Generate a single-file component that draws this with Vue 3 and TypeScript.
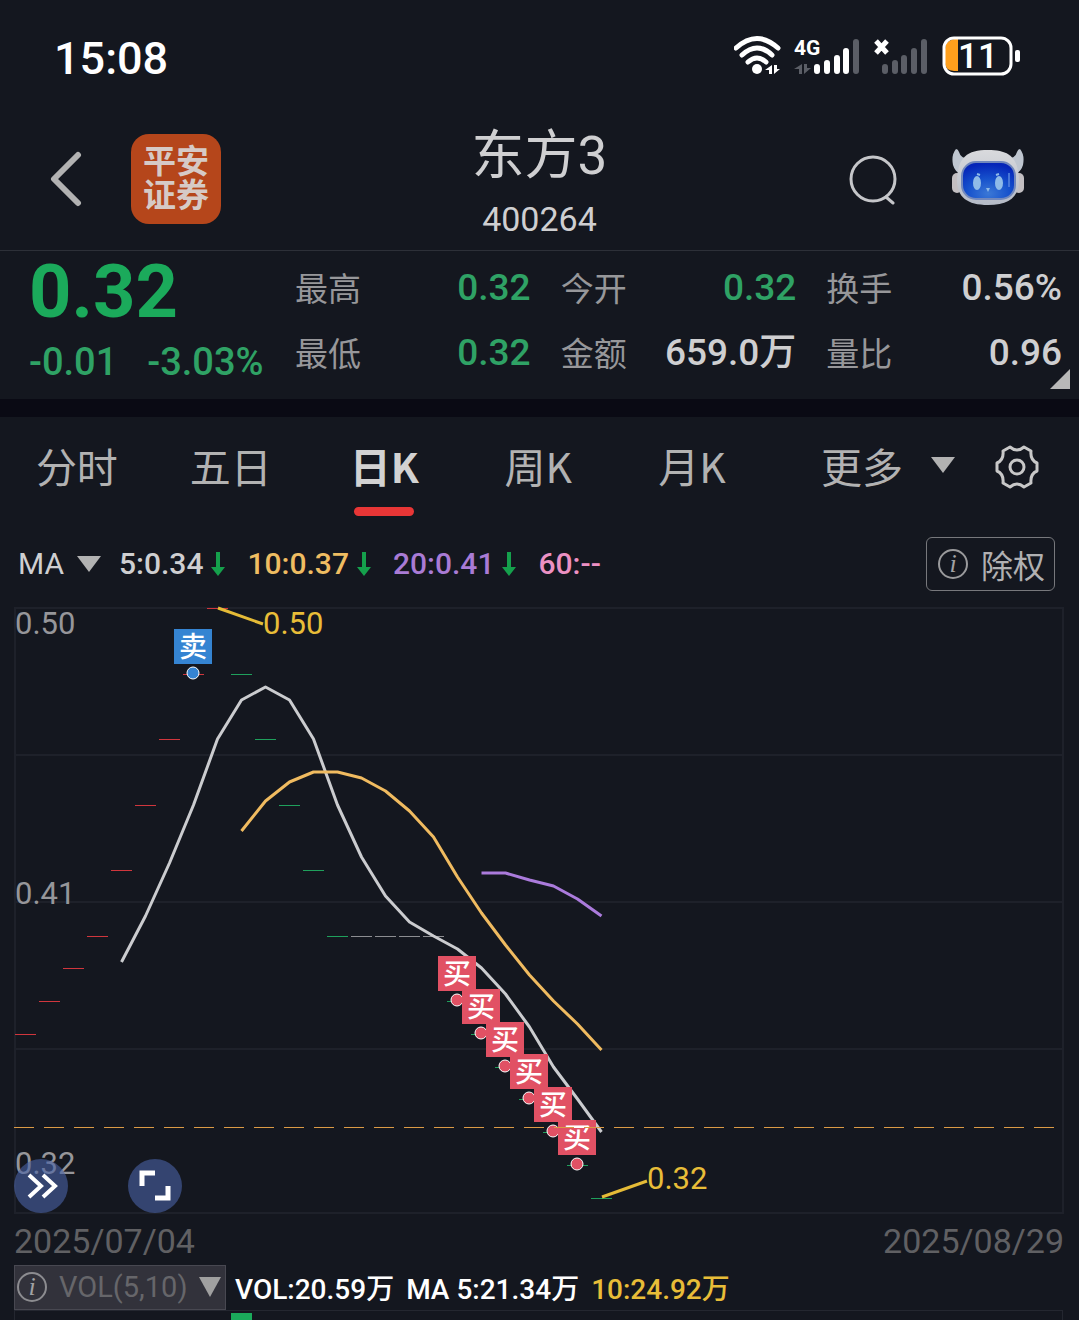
<script setup lang="ts">
import { computed, ref } from 'vue'

interface Quote { label: string; value: string; down?: boolean }
interface Average { text: string; tone: string; arrow: boolean }

const quotes: Quote[] = [
  { label: '最高', value: '0.32', down: true },
  { label: '今开', value: '0.32', down: true },
  { label: '换手', value: '0.56%' },
  { label: '最低', value: '0.32', down: true },
  { label: '金额', value: '659.0万' },
  { label: '量比', value: '0.96' },
]

const tabs = ['分时', '五日', '日K', '周K', '月K']
const activeTab = ref('日K')
const overlay = ref('MA')
const subChart = ref('VOL(5,10)')

const averages: Average[] = [
  { text: '5:0.34', tone: 'white', arrow: true },
  { text: '10:0.37', tone: 'orange', arrow: true },
  { text: '20:0.41', tone: 'purple', arrow: true },
  { text: '60:--', tone: 'pink', arrow: false },
]

const closes = [
  0.37, 0.38, 0.39, 0.4, 0.42, 0.44, 0.46, 0.48, 0.5, 0.48, 0.46, 0.44, 0.42,
  0.4, 0.4, 0.4, 0.4, 0.4, 0.38, 0.37, 0.36, 0.35, 0.34, 0.33, 0.32,
]
const xAt = (i: number): number => 11.5 + 24 * i
const yAt = (price: number): number => Math.round((0.5 - price) * 3275 + 0.01)

const candles = computed(() =>
  closes.map((price, i) => {
    const before = i === 0 ? 0.36 : closes[i - 1]
    const tone = price > before ? 'up' : price < before ? 'down' : 'flat'
    return { x: xAt(i) - 10.5, y: yAt(price), tone }
  }),
)

// Averages are cut to three decimals before they are plotted.
function average(days: number): string {
  const points: string[] = []
  for (let i = days - 1; i < closes.length; i++) {
    const sum = closes.slice(i - days + 1, i + 1).reduce((a, b) => a + b, 0)
    const mean = Math.floor((sum / days) * 1000 + 0.001) / 1000
    points.push(`${xAt(i)},${yAt(mean)}`)
  }
  return points.join(' ')
}

const trades = [
  { day: 7, kind: 'sell', label: '卖' },
  ...[18, 19, 20, 21, 22, 23].map((day) => ({ day, kind: 'buy', label: '买' })),
].map((t) => ({ ...t, x: Math.floor(xAt(t.day)), y: yAt(closes[t.day]) }))
</script>

<template>
  <main class="app">
    <div class="status">
      <time class="clock">15:08</time>
      <svg class="status-icons" viewBox="0 0 290 44" width="290" height="44" aria-hidden="true">
        <g fill="none" stroke="#fff" stroke-width="5" stroke-linecap="round">
          <path d="M2 14Q23-5 44 14" />
          <path d="M8 21Q23 7 38 21" />
          <path d="M14 28Q23 20 32 28" />
        </g>
        <circle cx="23" cy="35" r="5" fill="#fff" />
        <path d="M38 31v9h-3v-4h-4zM40 31v9l6-5h-3v-4z" fill="#fff" />
        <text x="60" y="21" class="net">4G</text>
        <path d="M68 30v10h-3v-5h-5zM70 30v10l7-6h-4v-4z" fill="#5b5e66" />
        <g stroke-width="6" stroke-linecap="round" stroke="#fff">
          <path d="M83 33v4M93 29v8M103 24v13M112 17v20" />
          <path d="M122 8v29M151 33v4M161 29v8M170 24v13M180 17v20M190 8v29" stroke="#5b5e66" />
        </g>
        <path d="M142 7l11 12M153 7l-11 12" stroke="#fff" stroke-width="5" />
        <path d="M224 5h-4q-9 2-9 10v14q0 7 9 8h4z" fill="#ff9f1c" />
        <rect x="210" y="4" width="67" height="36" rx="10" fill="none" stroke="#fff" stroke-width="3" />
        <rect x="281" y="16" width="5" height="12" rx="2" fill="#fff" />
        <text x="224" y="34" class="charge">11</text>
      </svg>
    </div>

    <header class="header">
      <div class="side">
        <button class="plain back" aria-label="返回">
          <svg viewBox="0 0 34 56" width="34" height="56"><path d="M29 4L5 28l24 24" fill="none" stroke="#b2b2b2" stroke-width="6" stroke-linecap="round" stroke-linejoin="round" /></svg>
        </button>
        <div class="brand"><span>平安</span><span>证券</span></div>
      </div>
      <div class="heading">
        <h1>东方3</h1>
        <p>400264</p>
      </div>
      <div class="side tools">
        <button class="plain" aria-label="搜索">
          <svg viewBox="0 0 50 52" width="50" height="52"><g fill="none" stroke="#c5c6c9" stroke-width="3" stroke-linecap="round"><circle cx="25" cy="26" r="22" /><path d="M38 44l7 6" /></g></svg>
        </button>
        <button class="plain" aria-label="智能助手">
          <svg viewBox="0 2 76 60" width="76" height="60">
            <defs>
              <linearGradient id="shell" x1="0" y1="0" x2="0" y2="1"><stop offset="0" stop-color="#d9dadd" /><stop offset="1" stop-color="#b4bac6" /></linearGradient>
              <radialGradient id="screen" cx=".5" cy=".85" r=".8"><stop offset="0" stop-color="#3b78d6" /><stop offset=".5" stop-color="#1651cc" /><stop offset="1" stop-color="#0525b8" /></radialGradient>
            </defs>
            <path d="M6 2Q1 8 3 18q2 7 8 9l12-15q-12 1-14-7-1-3-3-3zM70 2q5 6 3 16-2 7-8 9L53 12q12 1 14-7 1-3 3-3z" fill="#bfc6d0" />
            <rect x="2" y="26" width="10" height="20" rx="5" fill="#c3bfc2" />
            <rect x="64" y="26" width="10" height="20" rx="5" fill="#c3bfc2" />
            <path d="M38 3C17 3 8 10 7 33c0 17 10 25 31 25s31-8 31-25C68 10 59 3 38 3z" fill="url(#shell)" />
            <rect x="12" y="15" width="53" height="37" rx="14" fill="url(#screen)" stroke="#7188bd" stroke-width="2" />
            <ellipse cx="27" cy="36" rx="4" ry="7" fill="#8fbbe8" />
            <ellipse cx="49" cy="36" rx="4" ry="7" fill="#8fbbe8" />
            <path d="M27 27l3 1M46 28l3-1" stroke="#8fbbe8" stroke-width="2" />
            <path d="M36 41h4l-2 4z" fill="#8fbbe8" />
            <path d="M59 26v14" stroke="#4776d8" stroke-width="2" />
          </svg>
        </button>
      </div>
    </header>

    <section class="quote">
      <div class="price">
        <strong>0.32</strong>
        <p><span>-0.01</span><span>-3.03%</span></p>
      </div>
      <dl class="figures">
        <div v-for="q in quotes" :key="q.label">
          <dt>{{ q.label }}</dt>
          <dd :class="{ down: q.down }">{{ q.value }}</dd>
        </div>
      </dl>
      <svg class="corner" viewBox="0 0 20 20" width="20" height="20" aria-hidden="true"><path d="M20 0v20H0z" fill="#b8b8b8" /></svg>
    </section>

    <nav class="tabs">
      <button v-for="tab in tabs" :key="tab" class="plain tab" :class="{ active: tab === activeTab }" @click="activeTab = tab">{{ tab }}</button>
      <button class="plain more" aria-haspopup="menu">
        更多
        <svg viewBox="0 0 24 16" width="24" height="16"><path d="M0 0h24L12 16z" fill="#b2b2b2" /></svg>
      </button>
      <button class="plain gear" aria-label="设置">
        <svg viewBox="0 0 44 44" width="44" height="44"><g fill="none" stroke="#c8c8c8" stroke-width="3" stroke-linejoin="round"><path d="M15 2Q22 8 29 2l7 4q-1 9 6 12v8q-7 3-6 12l-7 4q-7-6-14 0l-7-4q1-9-6-12v-8q7-3 6-12z" /><circle cx="22" cy="22" r="7" /></g></svg>
      </button>
    </nav>

    <div class="indicators">
      <span class="picker overlay-picker">
        <select v-model="overlay" aria-label="主图指标"><option>MA</option></select>
        <svg viewBox="0 0 24 16" width="24" height="16" aria-hidden="true"><path d="M0 0h24L12 16z" fill="#b2b2b2" /></svg>
      </span>
      <span v-for="a in averages" :key="a.text" class="average" :class="a.tone">
        {{ a.text }}
        <svg v-if="a.arrow" viewBox="0 0 16 24" width="16" height="24" aria-hidden="true"><path d="M6 0h4v15h5L8 24 1 15h5z" fill="#15a04c" /></svg>
      </span>
      <button class="rights">
        <svg viewBox="0 0 32 32" width="32" height="32" aria-hidden="true"><circle cx="16" cy="16" r="14" fill="none" stroke="#9a9a9c" stroke-width="2" /><text x="16" y="24" class="info">i</text></svg>
        除权
      </button>
    </div>

    <section class="chart">
      <svg class="plot" viewBox="0 0 1049 605" role="img" aria-label="日K线图">
        <g class="grid">
          <rect x="1" y="0" width="1048" height="605" />
          <path d="M0 147h1049M0 294h1049M0 441h1049" />
        </g>
        <g class="axis">
          <text x="1" y="26">0.50</text>
          <text x="1" y="296">0.41</text>
          <text x="1" y="566">0.32</text>
        </g>
        <rect v-for="(c, i) in candles" :key="i" :x="c.x" :y="c.y" width="21" height="1" :class="c.tone" />
        <polyline class="line ma5" :points="average(5)" />
        <polyline class="line ma10" :points="average(10)" />
        <polyline class="line ma20" :points="average(20)" />
        <g v-for="t in trades" :key="t.day" :class="t.kind">
          <rect :x="t.x - 19" :y="t.y - 45" width="38" height="35" />
          <text :x="t.x" :y="t.y - 17">{{ t.label }}</text>
          <circle :cx="t.x" :cy="t.y - 1" r="6" />
        </g>
        <path class="latest" d="M0 519.5h1049" />
        <g class="extreme">
          <path d="M204 0l45 16M588 589l45-16" />
          <text x="249" y="26">0.50</text>
          <text x="633" y="581">0.32</text>
        </g>
      </svg>
      <div class="floating">
        <button aria-label="展开">
          <svg viewBox="0 0 54 54" width="54" height="54"><path d="M15 16l12 11-12 11M29 16l12 11-12 11" fill="none" stroke="#fff" stroke-width="4" /></svg>
        </button>
        <button aria-label="全屏">
          <svg viewBox="0 0 54 54" width="54" height="54"><path d="M14 27V14h13M27 39h13V27" fill="none" stroke="#fff" stroke-width="5" /></svg>
        </button>
      </div>
    </section>

    <div class="dates"><time>2025/07/04</time><time>2025/08/29</time></div>

    <div class="volume">
      <span class="picker sub-picker">
        <svg viewBox="0 0 32 32" width="32" height="32" aria-hidden="true"><circle cx="16" cy="16" r="14" fill="none" stroke="#8c8c90" stroke-width="2" /><text x="16" y="24" class="info">i</text></svg>
        <select v-model="subChart" aria-label="副图指标"><option>VOL(5,10)</option></select>
        <svg viewBox="0 0 22 20" width="22" height="20" aria-hidden="true"><path d="M0 0h22L11 20z" fill="#a0a0a0" /></svg>
      </span>
      <span class="readings">
        <span>VOL:20.59万</span>
        <span>MA 5:21.34万</span>
        <span class="gold">10:24.92万</span>
      </span>
    </div>
    <div class="bars"><i></i></div>
  </main>
</template>

<style>
body {
  background: #14171f;
}
</style>

<style scoped>
* {
  box-sizing: border-box;
}
.app {
  display: flex;
  flex-direction: column;
  min-height: 100vh;
  background: #14171f;
  color: #cfcfd1;
  font-family: Roboto, "Noto Sans CJK SC", sans-serif;
}
svg {
  display: block;
  flex: none;
}
p, h1, dl, dd {
  margin: 0;
}
button, select {
  font: inherit;
  color: inherit;
}
.plain {
  padding: 0;
  border: 0;
  background: none;
}
.status {
  display: flex;
  justify-content: space-between;
  align-items: center;
  height: 112px;
  padding: 0 55px 0 54px;
}
.clock {
  padding-top: 4px;
  color: #fff;
  font-size: 45px;
  font-weight: 500;
}
.net {
  fill: #fff;
  font-size: 21px;
  font-weight: 700;
}
.charge {
  fill: #fff;
  font-size: 35px;
  font-weight: 500;
}
.header {
  display: grid;
  grid-template-columns: 1fr auto 1fr;
  align-items: center;
  height: 139px;
  border-bottom: 1px solid #2d3038;
}
.side {
  display: flex;
  align-items: center;
  gap: 48px;
  padding: 0 0 4px 49px;
}
.tools {
  justify-content: flex-end;
  gap: 52px;
  padding: 0 53px 4px 0;
}
.brand {
  display: flex;
  flex-direction: column;
  justify-content: center;
  align-items: center;
  width: 90px;
  height: 90px;
  border-radius: 18px;
  background: #b5461b;
  color: #d6cac6;
  font-size: 33px;
  font-weight: 700;
  line-height: 34px;
}
.heading {
  text-align: center;
}
.heading h1 {
  font-size: 53px;
  font-weight: 400;
  line-height: 76px;
}
.heading p {
  font-size: 34px;
  line-height: 50px;
}
.quote {
  position: relative;
  display: flex;
  height: 148px;
  padding-right: 17px;
}
.price {
  flex: 0 0 295px;
  padding: 3px 0 0 29px;
  color: #2fa265;
}
.price strong {
  display: block;
  color: #1baa5b;
  font-size: 74px;
  line-height: 76px;
}
.price p {
  display: flex;
  gap: 30px;
  font-size: 38px;
  font-weight: 500;
  line-height: 64px;
}
.figures {
  display: grid;
  flex: 1;
  grid-template-columns: repeat(3, 1fr);
  grid-auto-rows: 65px;
  column-gap: 30px;
  padding-top: 4px;
}
.figures div {
  display: flex;
  justify-content: space-between;
  align-items: center;
}
.figures dt {
  padding-bottom: 2px;
  color: #97979a;
  font-size: 33px;
}
.figures dd {
  font-size: 37px;
  font-weight: 500;
  line-height: 44px;
}
.figures .down {
  color: #2fa265;
}
.corner {
  position: absolute;
  right: 9px;
  bottom: 10px;
}
.tabs {
  display: flex;
  height: 117px;
  padding-right: 40px;
  border-top: 18px solid #0a0a14;
  color: #b2b2b2;
  font-family: "Noto Sans CJK SC", sans-serif;
  font-size: 41px;
}
.tab {
  position: relative;
  flex: 0 0 14.8%;
  padding-bottom: 4px;
}
.active {
  color: #d2d2d2;
  font-weight: 700;
}
.active::after {
  content: "";
  position: absolute;
  bottom: 0;
  left: calc(50% - 30px);
  width: 60px;
  height: 9px;
  border-radius: 5px;
  background: #e83636;
}
.more {
  display: flex;
  flex: 1;
  justify-content: center;
  align-items: center;
  gap: 28px;
  padding: 0 0 4px 12px;
}
.indicators {
  display: flex;
  align-items: center;
  height: 92px;
  padding: 3px 24px 0 18px;
  font-size: 30px;
}
.picker {
  display: flex;
  align-items: center;
}
.picker select {
  padding: 0;
  border: 0;
  background: none;
  appearance: none;
}
.overlay-picker {
  gap: 12px;
  margin-right: 18px;
}
.average {
  display: flex;
  align-items: center;
  gap: 7px;
  margin-right: 21px;
  font-weight: 500;
}
.white { color: #cfcfd1; }
.orange { color: #efbd62; }
.purple { color: #a97bd5; }
.pink { color: #ec91c3; }
.rights {
  display: flex;
  align-items: center;
  gap: 12px;
  height: 54px;
  margin-left: auto;
  padding: 0 9px 0 10px;
  border: 1px solid #77787c;
  border-radius: 6px;
  background: none;
  color: #b0b0b2;
  font-size: 32px;
}
.info {
  fill: #a2a2a4;
  font-family: "Liberation Serif", serif;
  font-size: 26px;
  font-style: italic;
  text-anchor: middle;
}
.chart {
  position: relative;
  margin: 0 16px 0 14px;
}
.plot {
  width: 100%;
  height: auto;
  overflow: visible;
}
.plot text {
  font-size: 31px;
}
.grid rect, .grid path {
  fill: none;
  stroke: #1e212a;
  stroke-width: 2;
}
.axis text {
  fill: #96969a;
}
.up { fill: #d0363d; }
.down { fill: #1fa05c; }
.flat { fill: #8c8d91; }
.line {
  fill: none;
  stroke-width: 3;
  stroke-linejoin: round;
}
.ma5 { stroke: #cbcccf; }
.ma10 { stroke: #f0bb60; }
.ma20 { stroke: #ab7bdc; }
.buy rect, .buy circle { fill: #e15164; }
.sell rect, .sell circle { fill: #3584d2; }
.buy circle, .sell circle {
  stroke: #fff;
  stroke-width: 1;
}
.plot .buy text, .plot .sell text {
  fill: #fff;
  font-size: 28px;
  font-weight: 500;
  text-anchor: middle;
}
.latest {
  stroke: #db9a45;
  stroke-width: 1;
  stroke-dasharray: 20 10;
}
.extreme path {
  fill: none;
  stroke: #e5bb37;
  stroke-width: 3;
}
.extreme text {
  fill: #e8bd38;
}
.floating {
  position: absolute;
  bottom: 0;
  left: 0;
  display: flex;
  gap: 60px;
}
.floating button {
  padding: 0;
  border: 0;
  border-radius: 50%;
  background: rgba(73, 98, 166, 0.6);
}
.dates {
  display: flex;
  justify-content: space-between;
  height: 51px;
  padding: 0 15px 0 14px;
  color: #606063;
  font-size: 34px;
  line-height: 56px;
}
.volume {
  display: flex;
  align-items: center;
  gap: 9px;
  height: 46px;
  padding-left: 14px;
  white-space: nowrap;
}
.readings {
  display: flex;
  gap: 12px;
  color: #fff;
  font-size: 28px;
  font-weight: 500;
}
.sub-picker {
  gap: 11px;
  height: 45px;
  padding: 0 4px 0 1px;
  border: 1px solid #484851;
  background: #32323b;
  color: #66666a;
  font-size: 29px;
}
.gold {
  color: #e8bd38;
}
.bars {
  flex: 1;
  min-height: 9px;
  margin: 0 16px 0 14px;
  padding: 2px 0 0 216px;
  border: 1px solid #242730;
  border-bottom: 0;
}
.bars i {
  display: block;
  width: 21px;
  height: 100%;
  min-height: 7px;
  background: #1baa5b;
}
</style>
